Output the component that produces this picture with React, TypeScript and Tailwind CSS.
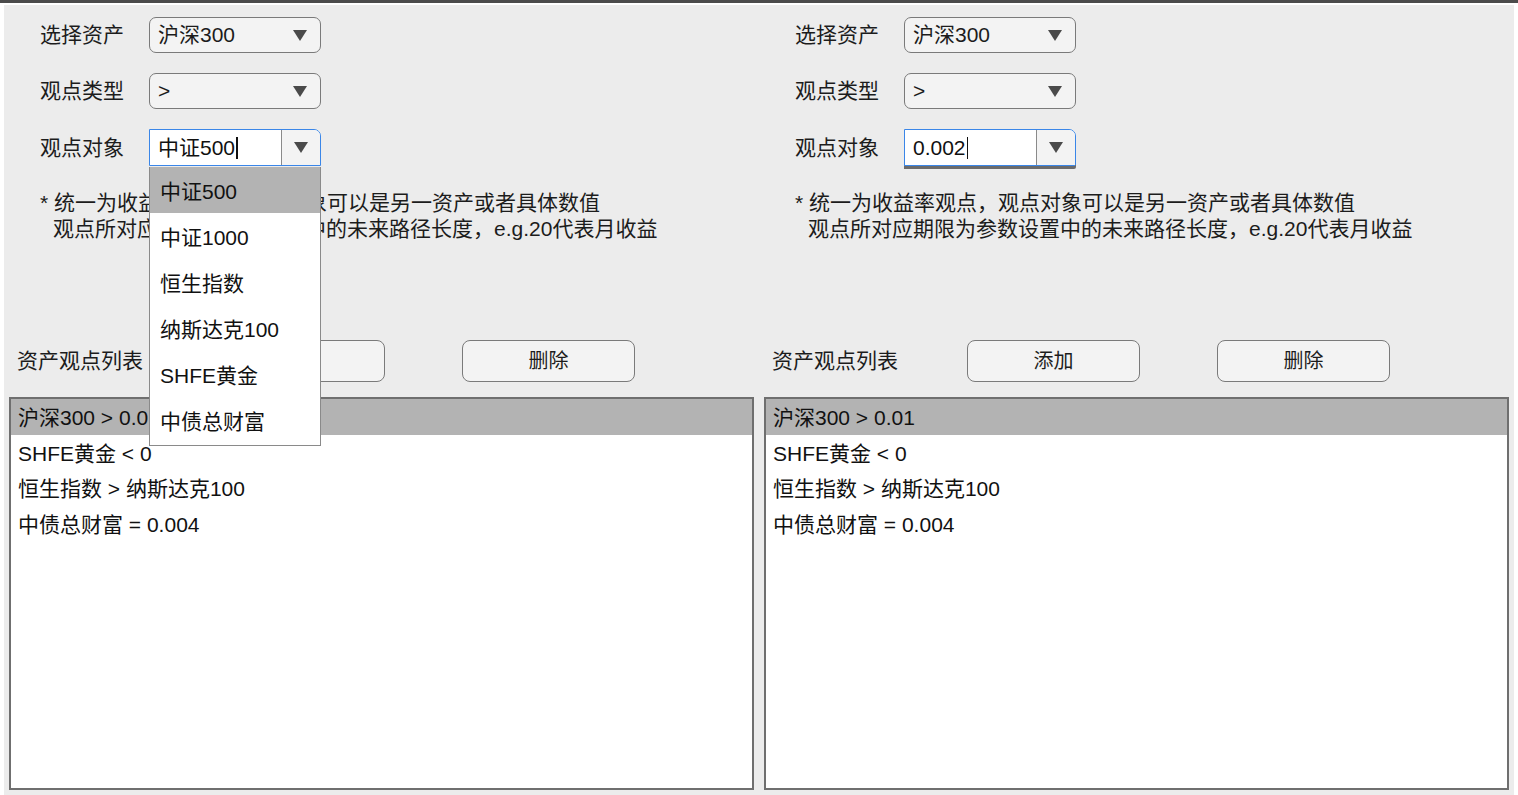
import React from 'react';

const font = { fontFamily: '"Liberation Sans", "Noto Sans CJK SC", sans-serif' };

const Arrow = () => (
  <svg width="14" height="11" viewBox="0 0 14 11" className="shrink-0">
    <path d="M0 0 L14 0 L7 11 Z" fill="#4a4a4a" />
  </svg>
);

const Select = ({ value }: { value: string }) => (
  <div className="flex h-[36px] w-[172px] items-center justify-between rounded-[7px] border border-[#7a7a7a] bg-[#f3f3f3] pl-[8px] pr-[13px]">
    <span className="text-[21px] text-[#1c1c1c]">{value}</span>
    <Arrow />
  </div>
);

const Combo = ({ value, open }: { value: string; open?: boolean }) => (
  <div className="relative w-[172px]">
    <div
      className={`flex h-[37px] w-full border border-[#3a86e8] bg-white ${
        open ? 'rounded-tr-[7px]' : 'rounded-tr-[7px] rounded-br-[2px] shadow-[0_3px_0_#6b6b6b]'
      }`}
    >
      <div className="flex flex-1 items-center pl-[8px] text-[21px] text-[#111]">
        {value}
        <span className="ml-[1px] inline-block h-[22px] w-[1.5px] bg-[#111]" />
      </div>
      <div className="flex w-[39px] items-center justify-center rounded-tr-[6px] border-l border-[#8a8a8a] bg-[#f3f3f3]">
        <Arrow />
      </div>
    </div>
    {open && (
      <div className="absolute left-0 top-[38px] z-10 w-[172px] border border-[#8a8a8a] border-t-0 bg-white pb-[2px]">
        {['中证500', '中证1000', '恒生指数', '纳斯达克100', 'SHFE黄金', '中债总财富'].map((o, i) => (
          <div
            key={o}
            className={`flex h-[46px] items-center pl-[10px] pt-[3px] text-[21px] text-[#111] ${i === 0 ? 'bg-[#b3b3b3]' : ''}`}
          >
            {o}
          </div>
        ))}
      </div>
    )}
  </div>
);

const Button = ({ label }: { label: string }) => (
  <div className="flex h-[42px] w-[173px] items-center justify-center rounded-[8px] border-[1.5px] border-[#7a7a7a] bg-[#f3f3f3] text-[20px] text-[#1c1c1c]">
    {label}
  </div>
);

const Row = ({ label, children }: { label: string; children: React.ReactNode }) => (
  <div className="flex items-center">
    <div className="w-[109px] text-[21px] text-[#1c1c1c]">{label}</div>
    {children}
  </div>
);

const views = ['沪深300 > 0.01', 'SHFE黄金 < 0', '恒生指数 > 纳斯达克100', '中债总财富 = 0.004'];

const Panel = ({ target, open }: { target: string; open?: boolean }) => (
  <div className="flex flex-1 flex-col">
    <div className="flex flex-col gap-[20px] pl-[36px] pt-[12px]">
      <Row label="选择资产">
        <Select value="沪深300" />
      </Row>
      <Row label="观点类型">
        <Select value=">" />
      </Row>
      <div className="relative z-10">
        <Row label="观点对象">
          <Combo value={target} open={open} />
        </Row>
      </div>
    </div>
    <div className="mt-[24px] pl-[36px] text-[21px] leading-[26px] text-[#1c1c1c]">
      <div>* 统一为收益率观点，观点对象可以是另一资产或者具体数值</div>
      <div className="pl-[13px]">观点所对应期限为参数设置中的未来路径长度，e.g.20代表月收益</div>
    </div>
    <div className="mt-[98px] flex items-center pl-[13px]">
      <div className="w-[195px] text-[21px] text-[#1c1c1c]">资产观点列表</div>
      <Button label="添加" />
      <div className="w-[77px]" />
      <Button label="删除" />
    </div>
    <div className="mx-[5px] mb-[5px] mt-[15px] flex-1 border-2 border-[#6f6f6f] bg-white">
      {views.map((v, i) => (
        <div
          key={v}
          className={`flex h-[35.5px] items-center pl-[7px] pt-[2px] text-[21px] text-[#111] ${i === 0 ? 'bg-[#b3b3b3]' : ''}`}
        >
          {v}
        </div>
      ))}
    </div>
  </div>
);

export default function App() {
  return (
    <div className="h-[795px] w-[1518px] border-t-[3px] border-[#4b4b4b] bg-white pl-[4px] pr-[4px] pt-[2px]" style={font}>
      <div className="flex h-full bg-[#ececec]">
        <Panel target="中证500" open />
        <Panel target="0.002" />
      </div>
    </div>
  );
}
